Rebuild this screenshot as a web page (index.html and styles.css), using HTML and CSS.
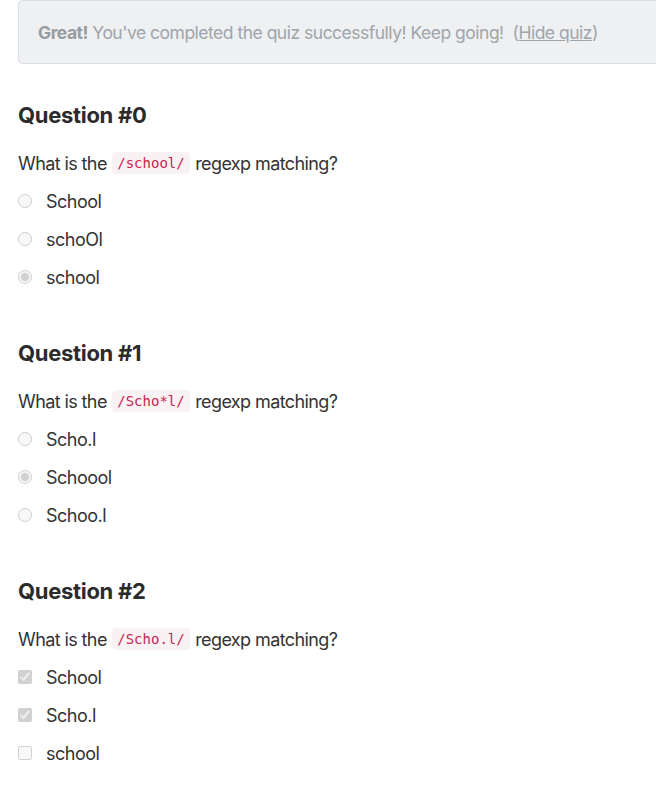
FILE: index.html
```html
<!DOCTYPE html>
<html>
<head>
<meta charset="utf-8">
<link rel="stylesheet" href="styles.css">
</head>
<body>
<div class="page">
  <div class="alert"><b>Great!</b> You've completed the quiz successfully! Keep going! &nbsp;(<a href="#">Hide quiz</a>)</div>

  <section class="question">
    <h2>Question #0</h2>
    <p class="prompt">What is the <code>/school/</code> regexp matching?</p>
    <label class="opt"><input type="radio" name="q0" disabled><span>School</span></label>
    <label class="opt"><input type="radio" name="q0" disabled><span>schoOl</span></label>
    <label class="opt"><input type="radio" name="q0" disabled checked><span>school</span></label>
  </section>

  <section class="question">
    <h2>Question #1</h2>
    <p class="prompt">What is the <code>/Scho*l/</code> regexp matching?</p>
    <label class="opt"><input type="radio" name="q1" disabled><span>Scho.l</span></label>
    <label class="opt"><input type="radio" name="q1" disabled checked><span>Schoool</span></label>
    <label class="opt"><input type="radio" name="q1" disabled><span>Schoo.l</span></label>
  </section>

  <section class="question">
    <h2>Question #2</h2>
    <p class="prompt">What is the <code>/Scho.l/</code> regexp matching?</p>
    <label class="opt"><input type="checkbox" disabled checked><span>School</span></label>
    <label class="opt"><input type="checkbox" disabled checked><span>Scho.l</span></label>
    <label class="opt"><input type="checkbox" disabled><span>school</span></label>
  </section>
</div>
</body>
</html>
```
FILE: styles.css
```css
html, body {
  margin: 0;
  padding: 0;
  background: #fff;
  overflow: hidden;
}
body {
  font-family: Inter, "Noto Sans", sans-serif;
  color: #333;
  font-size: 18px;
}
.page {
  padding-left: 18px;
  width: 638px;
}
.alert {
  box-sizing: border-box;
  width: 700px;
  height: 64px;
  display: flex;
  align-items: center;
  padding: 0 19px;
  background: #eef0f2;
  border: 1px solid #dcdfe2;
  border-radius: 4px;
  color: #a0a5ab;
  font-size: 17.5px;
  letter-spacing: -0.5px;
  white-space: pre;
}
.alert b {
  font-weight: 700;
  color: #979ca2;
}
.alert a {
  color: #a0a5ab;
  text-decoration: underline;
}
.question {
  display: flex;
  flex-direction: column;
  align-items: flex-start;
  padding-bottom: 6px;
}
.question h2 {
  margin: 37px 0 0;
  font-size: 22px;
  line-height: 28px;
  font-weight: 700;
  color: #2b2b2b;
  letter-spacing: -0.3px;
}
.prompt {
  margin: 15px 0 0;
  height: 38px;
  display: flex;
  align-items: center;
  letter-spacing: -0.6px;
  white-space: pre;
}
code {
  font-family: "DejaVu Sans Mono", monospace;
  font-size: 14px;
  line-height: 22px;
  color: #c7254e;
  background: #f9f2f4;
  border-radius: 4px;
  padding: 0 5px;
  margin: 0 1px;
  letter-spacing: 0;
}
.opt {
  display: flex;
  align-items: center;
  height: 38px;
  letter-spacing: -0.5px;
}
.opt input {
  margin: 0 14px 0 0;
  width: 14px;
  height: 14px;
}
```
